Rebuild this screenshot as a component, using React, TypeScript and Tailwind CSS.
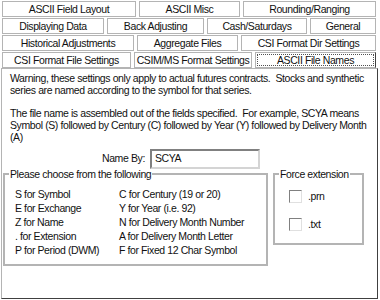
import React from "react";

const rows: { label: string; w: number; active?: boolean }[][] = [
  [
    { label: "ASCII Field Layout", w: 134 },
    { label: "ASCII Misc", w: 101 },
    { label: "Rounding/Ranging", w: 133 },
  ],
  [
    { label: "Displaying Data", w: 102 },
    { label: "Back Adjusting", w: 97 },
    { label: "Cash/Saturdays", w: 100 },
    { label: "General", w: 66 },
  ],
  [
    { label: "Historical Adjustments", w: 132 },
    { label: "Aggregate Files", w: 101 },
    { label: "CSI Format Dir Settings", w: 135 },
  ],
  [
    { label: "CSI Format File Settings", w: 129 },
    { label: "CSIM/MS Format Settings", w: 118 },
    { label: "ASCII File Names", w: 121, active: true },
  ],
];

const leftItems = ["S for Symbol", "E for Exchange", "Z for Name", ". for Extension", "P for Period (DWM)"];
const rightItems = [
  "C for Century (19 or 20)",
  "Y for Year (i.e. 92)",
  "N for Delivery Month Number",
  "A for Delivery Month Letter",
  "F for Fixed 12 Char Symbol",
];

function Tab({ label, w, active }: { label: string; w: number; active?: boolean }) {
  return (
    <div
      style={{ width: w }}
      className={
        "h-[16px] shrink-0 border border-[#b4b4b4] bg-white flex items-center justify-center whitespace-nowrap " +
        (active ? "border-r-[#404040] p-[1px]" : "")
      }
    >
      <div
        className={
          "w-full h-full flex items-center justify-center leading-none " +
          (active ? "border border-dotted border-[#505050]" : "")
        }
      >
        {label}
      </div>
    </div>
  );
}

function Check({ label }: { label: string }) {
  return (
    <div className="flex items-center gap-[6px] h-[13px]">
      <div className="w-[13px] h-[13px] border border-t-[#808080] border-l-[#808080] border-r-[#e0e0e0] border-b-[#e0e0e0] bg-white" />
      <span>{label}</span>
    </div>
  );
}

export default function App() {
  return (
    <div
      className="w-[380px] h-[300px] bg-white text-[10.5px] tracking-[-0.4px] text-[#111] overflow-hidden"
      style={{ fontFamily: '"Liberation Sans", Arial, sans-serif' }}
    >
      <div className="flex flex-col gap-[1px] pt-[1px] pl-[2px]">
        {rows.map((r, i) => (
          <div key={i} className="flex gap-[3px]">
            {r.map((t) => (
              <Tab key={t.label} {...t} />
            ))}
          </div>
        ))}
      </div>
      <div className="ml-[1px] w-[377px] h-[231px] border border-[#b4b4b4] border-r-[#404040] border-b-[#404040] px-[8px] pt-[3px]">
        <p className="leading-[12px] w-[358px]">
          Warning, these settings only apply to actual futures contracts.&nbsp; Stocks and synthetic series are named
          according to the symbol for that series.
        </p>
        <p className="leading-[12px] mt-[11px] w-[358px]">
          The file name is assembled out of the fields specified.&nbsp; For example, SCYA means Symbol (S) followed by
          Century (C) followed by Year (Y) followed by Delivery Month (A)
        </p>
        <div className="flex items-center mt-[6px] ml-[92px] gap-[5px]">
          <span>Name By:</span>
          <div className="w-[110px] h-[20px] border-2 border-t-[#808080] border-l-[#808080] border-r-[#d4d4d4] border-b-[#d4d4d4] flex items-center px-[3px]">
            SCYA
          </div>
        </div>
        <div className="flex gap-[5px] -mt-[1px] -ml-[7px]">
          <fieldset className="w-[265px] h-[98px] border-2 border-double border-[#b4b4b4] pl-[10px]">
            <legend className="px-[1px] -ml-[6px] leading-[12px]">Please choose from the following</legend>
            <div className="flex mt-[7px] leading-[14px]">
              <div className="w-[104px] flex flex-col">
                {leftItems.map((s) => (
                  <span key={s}>{s}</span>
                ))}
              </div>
              <div className="flex flex-col">
                {rightItems.map((s) => (
                  <span key={s}>{s}</span>
                ))}
              </div>
            </div>
          </fieldset>
          <fieldset className="w-[91px] h-[77px] border-2 border-double border-[#b4b4b4] pl-[14px]">
            <legend className="px-[1px] -ml-[10px] leading-[12px]">Force extension</legend>
            <div className="flex flex-col gap-[15px] mt-[10px]">
              <Check label=".prn" />
              <Check label=".txt" />
            </div>
          </fieldset>
        </div>
      </div>
    </div>
  );
}
